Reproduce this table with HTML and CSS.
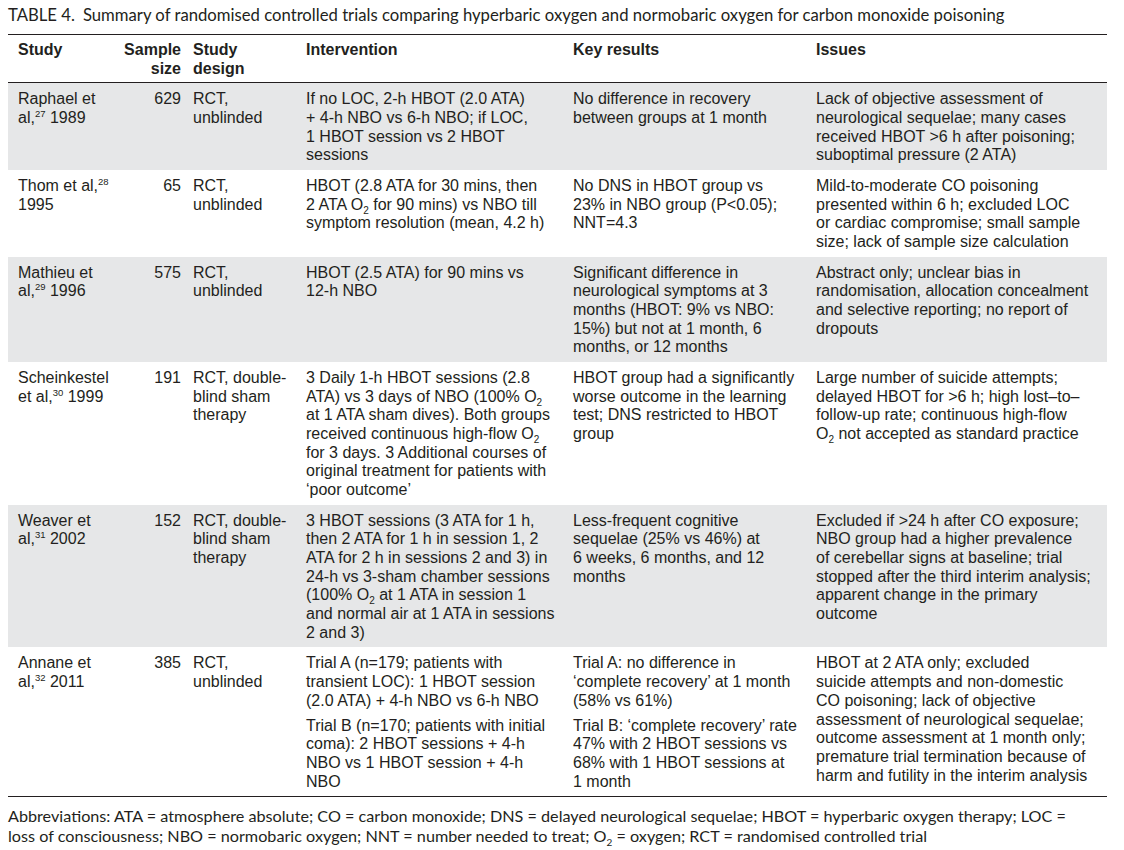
FILE: index.html
```html
<!DOCTYPE html>
<html lang="en">
<head>
<meta charset="utf-8">
<title>Table 4</title>
<link rel="stylesheet" href="styles.css">
</head>
<body>
<div class="page">
  <p class="caption"><span class="label">TABLE 4.</span>Summary of randomised controlled trials comparing hyperbaric oxygen and normobaric oxygen for carbon monoxide poisoning</p>
  <table class="trials">
    <colgroup>
      <col class="c-study">
      <col class="c-size">
      <col class="c-design">
      <col class="c-int">
      <col class="c-res">
      <col class="c-iss">
    </colgroup>
    <thead>
      <tr>
        <th class="study">Study</th>
        <th class="num">Sample<br>size</th>
        <th>Study<br>design</th>
        <th>Intervention</th>
        <th>Key results</th>
        <th>Issues</th>
      </tr>
    </thead>
    <tbody>
      <tr class="shade">
        <td class="study">Raphael et<br>al,<sup>27</sup> 1989</td>
        <td class="num">629</td>
        <td>RCT,<br>unblinded</td>
        <td>If no LOC, 2-h HBOT (2.0 ATA)<br>+ 4-h NBO vs 6-h NBO; if LOC,<br>1 HBOT session vs 2 HBOT<br>sessions</td>
        <td>No difference in recovery<br>between groups at 1 month</td>
        <td>Lack of objective assessment of<br>neurological sequelae; many cases<br>received HBOT &gt;6 h after poisoning;<br>suboptimal pressure (2 ATA)</td>
      </tr>
      <tr>
        <td class="study">Thom et al,<sup>28</sup><br>1995</td>
        <td class="num">65</td>
        <td>RCT,<br>unblinded</td>
        <td>HBOT (2.8 ATA for 30 mins, then<br>2 ATA O<sub>2</sub> for 90 mins) vs NBO till<br>symptom resolution (mean, 4.2 h)</td>
        <td>No DNS in HBOT group vs<br>23% in NBO group (P&lt;0.05);<br>NNT=4.3</td>
        <td>Mild-to-moderate CO poisoning<br>presented within 6 h; excluded LOC<br>or cardiac compromise; small sample<br>size; lack of sample size calculation</td>
      </tr>
      <tr class="shade">
        <td class="study">Mathieu et<br>al,<sup>29</sup> 1996</td>
        <td class="num">575</td>
        <td>RCT,<br>unblinded</td>
        <td>HBOT (2.5 ATA) for 90 mins vs<br>12-h NBO</td>
        <td>Significant difference in<br>neurological symptoms at 3<br>months (HBOT: 9% vs NBO:<br>15%) but not at 1 month, 6<br>months, or 12 months</td>
        <td>Abstract only; unclear bias in<br>randomisation, allocation concealment<br>and selective reporting; no report of<br>dropouts</td>
      </tr>
      <tr>
        <td class="study">Scheinkestel<br>et al,<sup>30</sup> 1999</td>
        <td class="num">191</td>
        <td>RCT, double-<br>blind sham<br>therapy</td>
        <td>3 Daily 1-h HBOT sessions (2.8<br>ATA) vs 3 days of NBO (100% O<sub>2</sub><br>at 1 ATA sham dives). Both groups<br>received continuous high-flow O<sub>2</sub><br>for 3 days. 3 Additional courses of<br>original treatment for patients with<br>‘poor outcome’</td>
        <td>HBOT group had a significantly<br>worse outcome in the learning<br>test; DNS restricted to HBOT<br>group</td>
        <td>Large number of suicide attempts;<br>delayed HBOT for &gt;6 h; high lost–to–<br>follow-up rate; continuous high-flow<br>O<sub>2</sub> not accepted as standard practice</td>
      </tr>
      <tr class="shade">
        <td class="study">Weaver et<br>al,<sup>31</sup> 2002</td>
        <td class="num">152</td>
        <td>RCT, double-<br>blind sham<br>therapy</td>
        <td>3 HBOT sessions (3 ATA for 1 h,<br>then 2 ATA for 1 h in session 1, 2<br>ATA for 2 h in sessions 2 and 3) in<br>24-h vs 3-sham chamber sessions<br>(100% O<sub>2</sub> at 1 ATA in session 1<br>and normal air at 1 ATA in sessions<br>2 and 3)</td>
        <td>Less-frequent cognitive<br>sequelae (25% vs 46%) at<br>6 weeks, 6 months, and 12<br>months</td>
        <td>Excluded if &gt;24 h after CO exposure;<br>NBO group had a higher prevalence<br>of cerebellar signs at baseline; trial<br>stopped after the third interim analysis;<br>apparent change in the primary<br>outcome</td>
      </tr>
      <tr>
        <td class="study">Annane et<br>al,<sup>32</sup> 2011</td>
        <td class="num">385</td>
        <td>RCT,<br>unblinded</td>
        <td><p class="para">Trial A (n=179; patients with<br>transient LOC): 1 HBOT session<br>(2.0 ATA) + 4-h NBO vs 6-h NBO</p><p class="para">Trial B (n=170; patients with initial<br>coma): 2 HBOT sessions + 4-h<br>NBO vs 1 HBOT session + 4-h<br>NBO</p></td>
        <td><p class="para">Trial A: no difference in<br>‘complete recovery’ at 1 month<br>(58% vs 61%)</p><p class="para">Trial B: ‘complete recovery’ rate<br>47% with 2 HBOT sessions vs<br>68% with 1 HBOT sessions at<br>1 month</p></td>
        <td>HBOT at 2 ATA only; excluded<br>suicide attempts and non-domestic<br>CO poisoning; lack of objective<br>assessment of neurological sequelae;<br>outcome assessment at 1 month only;<br>premature trial termination because of<br>harm and futility in the interim analysis</td>
      </tr>
    </tbody>
  </table>
  <p class="notes">Abbreviations: ATA = atmosphere absolute; CO = carbon monoxide; DNS = delayed neurological sequelae; HBOT = hyperbaric oxygen therapy; LOC =<br>loss of consciousness; NBO = normobaric oxygen; NNT = number needed to treat; O<sub>2</sub> = oxygen; RCT = randomised controlled trial</p>
</div>
</body>
</html>
```

FILE: styles.css
```css
html, body {
  margin: 0;
  padding: 0;
  background: #ffffff;
}

.page {
  padding: 5px 17px 0 8px;
  color: #231f20;
}

.caption {
  margin: 0 0 9px 0;
  font-family: "Lato", "Open Sans", sans-serif;
  font-size: 16.7px;
  line-height: 20px;
  white-space: nowrap;
}

.caption .label {
  margin-right: 8px;
}

.trials {
  width: 1099px;
  border-collapse: collapse;
  table-layout: fixed;
  font-family: "Liberation Sans", Arial, sans-serif;
  font-size: 16px;
  line-height: 18.67px;
  border-top: 1.5px solid #231f20;
  border-bottom: 1.5px solid #231f20;
}

.c-study { width: 105px; }
.c-size { width: 72px; }
.c-design { width: 113px; }
.c-int { width: 267px; }
.c-res { width: 243px; }
.c-iss { width: 299px; }

.trials th,
.trials td {
  text-align: left;
  vertical-align: top;
  white-space: nowrap;
  padding: 7px 2px 5px 8px;
}

.trials th {
  font-weight: bold;
  padding-top: 6px;
  padding-bottom: 4px;
}

.trials thead tr {
  border-bottom: 1.5px solid #231f20;
}

.trials .study {
  padding-left: 10px;
  padding-right: 0;
}

.trials .num {
  text-align: right;
  padding-right: 4px;
  padding-left: 0;
}

.trials .shade td {
  background: #e6e7e8;
}

.trials sup {
  font-size: 9.5px;
  line-height: 0;
  vertical-align: 6px;
}

.trials sub,
.notes sub {
  font-size: 10px;
  line-height: 0;
  vertical-align: -4px;
}

.para {
  margin: 0;
}

.para + .para {
  margin-top: 6px;
}

.notes {
  margin: 9px 0 0 0;
  font-family: "Lato", "Open Sans", sans-serif;
  font-size: 16.2px;
  line-height: 20px;
  white-space: nowrap;
}
```
